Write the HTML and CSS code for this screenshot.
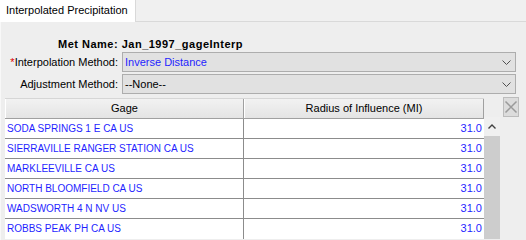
FILE: index.html
```html
<!DOCTYPE html>
<html>
<head>
<meta charset="utf-8">
<link rel="stylesheet" href="styles.css">
</head>
<body>
<div class="tabs">
  <div class="tab">Interpolated Precipitation</div>
  <div class="tab-rest"></div>
</div>
<div class="panel">
  <div class="met-name">Met Name: Jan_1997_gageInterp</div>
  <div class="field">
    <label class="label"><span class="req">*</span>Interpolation Method:</label>
    <div class="combo"><span class="combo-value selected">Inverse Distance</span>
      <svg class="chev" width="9" height="5" viewBox="0 0 9 5"><path d="M0.5 0.5 L4.5 4.5 L8.5 0.5" fill="none" stroke="#505050" stroke-width="1"/></svg>
    </div>
  </div>
  <div class="field">
    <label class="label">Adjustment Method:</label>
    <div class="combo"><span class="combo-value">--None--</span>
      <svg class="chev" width="9" height="5" viewBox="0 0 9 5"><path d="M0.5 0.5 L4.5 4.5 L8.5 0.5" fill="none" stroke="#505050" stroke-width="1"/></svg>
    </div>
  </div>
  <div class="table-area">
    <div class="table">
      <div class="thead">
        <div class="th col-gage">Gage</div>
        <div class="th col-radius">Radius of Influence (MI)</div>
      </div>
      <div class="tr"><div class="td col-gage">SODA SPRINGS 1 E CA US</div><div class="td col-radius num">31.0</div></div>
      <div class="tr"><div class="td col-gage">SIERRAVILLE RANGER STATION CA US</div><div class="td col-radius num">31.0</div></div>
      <div class="tr"><div class="td col-gage">MARKLEEVILLE CA US</div><div class="td col-radius num">31.0</div></div>
      <div class="tr"><div class="td col-gage">NORTH BLOOMFIELD CA US</div><div class="td col-radius num">31.0</div></div>
      <div class="tr"><div class="td col-gage">WADSWORTH 4 N NV US</div><div class="td col-radius num">31.0</div></div>
      <div class="tr"><div class="td col-gage">ROBBS PEAK PH CA US</div><div class="td col-radius num">31.0</div></div>
    </div>
    <div class="scrollbar">
      <div class="scroll-up">
        <svg width="8" height="5" viewBox="0 0 8 5"><path d="M0.5 4.5 L4 1 L7.5 4.5" fill="none" stroke="#404040" stroke-width="1.4"/></svg>
      </div>
      <div class="scroll-thumb"></div>
    </div>
    <div class="side">
      <div class="remove-btn">
        <svg width="14" height="14" viewBox="0 0 14 14"><path d="M1.5 1.5 L12.5 12.5 M12.5 1.5 L1.5 12.5" stroke="#9a9a9a" stroke-width="1.5"/></svg>
      </div>
    </div>
  </div>
</div>
</body>
</html>
```

FILE: styles.css
```css
html, body {
  margin: 0;
  padding: 0;
}
body {
  width: 526px;
  height: 240px;
  overflow: hidden;
  background: #f0f0f0;
  font-family: "Liberation Sans", Arial, sans-serif;
  font-size: 11px;
  color: #000;
}
.tabs {
  display: flex;
  height: 22px;
}
.tab {
  width: 129px;
  padding-left: 6px;
  background: #ffffff;
  border-right: 1px solid #d9d9d9;
  line-height: 20px;
  white-space: nowrap;
}
.tab-rest {
  flex: 1;
  background: #f0f0f0;
  border-bottom: 1px solid #d9d9d9;
}
.panel {
  height: 218px;
  background: #eeeeee;
  border-left: 1px solid #f8f8f8;
  padding-top: 14px;
  box-sizing: border-box;
}
.met-name {
  font-weight: bold;
  letter-spacing: 0.5px;
  padding-left: 57px;
  height: 16px;
  line-height: 16px;
}
.field {
  display: flex;
  align-items: center;
  height: 20px;
  margin-bottom: 2px;
}
.label {
  width: 117px;
  text-align: right;
  padding-right: 4px;
  white-space: nowrap;
}
.req {
  color: #e00000;
}
.combo {
  width: 386px;
  height: 18px;
  border: 1px solid #adadad;
  background: #e1e1e1;
  display: flex;
  align-items: center;
  justify-content: space-between;
  padding: 0 4px 0 2px;
  box-sizing: content-box;
}
.combo-value.selected {
  color: #1f1fff;
}
.chev {
  display: block;
}
.table-area {
  display: flex;
  margin-top: 4px;
  padding-left: 4px;
}
.table {
  width: 479px;
  background: #ffffff;
}
.thead {
  display: flex;
  height: 21px;
  background: linear-gradient(#f2f2f2, #e4e4e4);
  border-top: 1px solid #d6d6d6;
  border-bottom: 1px solid #a0a0a0;
  box-sizing: border-box;
}
.th {
  line-height: 19px;
  text-align: center;
  box-sizing: border-box;
  white-space: nowrap;
}
.th.col-gage {
  border-left: 1px solid #ffffff;
  border-right: 1px solid #a0a0a0;
}
.th.col-radius {
  border-left: 1px solid #ffffff;
  border-right: 1px solid #a0a0a0;
}
.col-gage {
  width: 239px;
}
.col-radius {
  width: 240px;
}
.tr {
  display: flex;
  height: 20px;
  border-bottom: 1px solid #8c8c8c;
  box-sizing: border-box;
}
.tr:last-child {
  border-bottom: none;
}
.td {
  line-height: 19px;
  font-size: 10px;
  color: #1f1fff;
  padding-left: 2px;
  box-sizing: border-box;
  white-space: nowrap;
  overflow: hidden;
}
.td.col-gage {
  border-right: 1px solid #8c8c8c;
}
.td.num {
  font-size: 11px;
  text-align: right;
  padding-right: 2px;
}
.scrollbar {
  width: 16px;
  display: flex;
  flex-direction: column;
  padding-top: 19px;
}
.scroll-up {
  height: 19px;
  background: #f0f0f0;
  display: flex;
  align-items: center;
  justify-content: center;
}
.scroll-up svg {
  display: block;
}
.scroll-thumb {
  flex: 1;
  background: #cdcdcd;
  height: 120px;
}
.side {
  flex: 1;
  padding-left: 3px;
}
.remove-btn {
  width: 14px;
  height: 18px;
  border: 1px solid #bcbcbc;
  background: #dcdcdc;
  display: flex;
  align-items: center;
  justify-content: center;
  margin-top: -1px;
}
.remove-btn svg {
  display: block;
}
```
